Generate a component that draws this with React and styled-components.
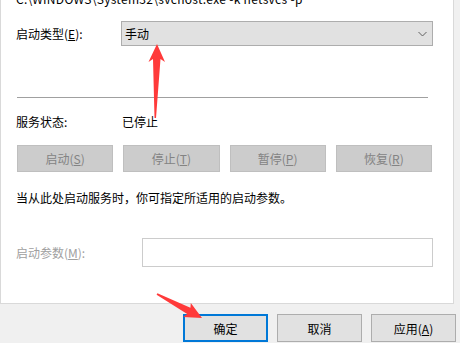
import React from "react";
import styled, { createGlobalStyle } from "styled-components";

const GlobalStyle = createGlobalStyle`
  html, body {
    margin: 0;
    padding: 0;
    background: #f0f0f0;
  }
  body {
    font-family: "Noto Sans CJK SC", "Noto Sans", sans-serif;
    font-size: 12px;
    color: #000;
  }
`;

const Page = styled.div`
  position: relative;
  width: 460px;
  height: 343px;
  overflow: hidden;
  background: #f0f0f0;
`;

const Panel = styled.section`
  box-sizing: border-box;
  width: 454px;
  height: 304px;
  background: #fff;
  border: 1px solid #d9d9d9;
  border-top: none;
  padding: 0 20px 0 15px;
  display: flex;
  flex-direction: column;
`;

const CommandLine = styled.div`
  margin-top: -9px;
  height: 16px;
  line-height: 16px;
  letter-spacing: 0.3px;
  white-space: nowrap;
`;

const Row = styled.div`
  display: flex;
  align-items: center;
  height: ${(p) => p.$h}px;
  margin-top: ${(p) => p.$mt}px;
`;

const Label = styled.span`
  flex: none;
  width: ${(p) => p.$w}px;
  color: ${(p) => (p.$disabled ? "#a0a0a0" : "#000")};
  white-space: nowrap;
`;

const Select = styled.div`
  box-sizing: border-box;
  flex: 1;
  height: 25px;
  display: flex;
  align-items: center;
  justify-content: space-between;
  padding: 0 5px 0 3px;
  background: #e1e1e1;
  border: 1px solid #adadad;
`;

const Divider = styled.hr`
  margin: 51px 5px 0 1px;
  border: none;
  height: 1px;
  background: #a0a0a0;
`;

const ButtonGrid = styled.div`
  display: grid;
  grid-template-columns: repeat(4, 1fr);
  gap: 10px;
  height: 27px;
  margin: 16px 1px 0 1px;
`;

const DisabledButton = styled.div`
  box-sizing: border-box;
  display: flex;
  align-items: center;
  justify-content: center;
  background: #cccccc;
  border: 1px solid #bfbfbf;
  color: #838383;
`;

const TextInput = styled.div`
  box-sizing: border-box;
  flex: 1;
  height: 29px;
  border: 1px solid #cccccc;
  background: #fff;
`;

const Footer = styled.footer`
  display: flex;
  justify-content: flex-end;
  gap: 9px;
  padding: 10px 4px 0 0;
`;

const DialogButton = styled.div`
  box-sizing: border-box;
  width: 85px;
  height: 28px;
  display: flex;
  align-items: center;
  justify-content: center;
  background: #e1e1e1;
  border: ${(p) => (p.$default ? "2px solid #0078d7" : "1px solid #adadad")};
`;

const Overlay = styled.svg`
  position: absolute;
  left: 0;
  top: 0;
  pointer-events: none;
`;

const Chevron = () => (
  <svg width="9" height="6" viewBox="0 0 9 6">
    <path d="M0.5 1 L4.5 5 L8.5 1" fill="none" stroke="#606060" strokeWidth="1" />
  </svg>
);

const Key = ({ children }) => <u>{children}</u>;

const App = () => {
  return (
    <Page>
      <GlobalStyle />
      <Panel>
        <CommandLine>C:\WINDOWS\System32\svchost.exe -k netsvcs -p</CommandLine>

        <Row $h={25} $mt={14}>
          <Label $w={105}>
            启动类型(<Key>E</Key>):
          </Label>
          <Select>
            <span>手动</span>
            <Chevron />
          </Select>
        </Row>

        <Divider />

        <Row $h={16} $mt={15}>
          <Label $w={106}>服务状态:</Label>
          <span>已停止</span>
        </Row>

        <ButtonGrid>
          <DisabledButton>
            启动(<Key>S</Key>)
          </DisabledButton>
          <DisabledButton>
            停止(<Key>T</Key>)
          </DisabledButton>
          <DisabledButton>
            暂停(<Key>P</Key>)
          </DisabledButton>
          <DisabledButton>
            恢复(<Key>R</Key>)
          </DisabledButton>
        </ButtonGrid>

        <Row $h={16} $mt={17}>
          当从此处启动服务时，你可指定所适用的启动参数。
        </Row>

        <Row $h={29} $mt={33}>
          <Label $w={126} $disabled>
            启动参数(<Key>M</Key>):
          </Label>
          <TextInput />
        </Row>
      </Panel>

      <Footer>
        <DialogButton $default>确定</DialogButton>
        <DialogButton>取消</DialogButton>
        <DialogButton>
          应用(<Key>A</Key>)
        </DialogButton>
      </Footer>

      <Overlay width="460" height="343" viewBox="0 0 460 343">
        <polygon
          fill="#ff3a3a"
          points="157,44 165,62 160.5,59 156,118 154.5,118 153,59 148.5,62"
        />
        <polygon
          fill="#ff3a3a"
          points="202,318 190.8,302.9 190.4,307.8 157.4,293.3 156.6,294.7 187.2,314 183.2,317.1"
        />
      </Overlay>
    </Page>
  );
};

export default App;
